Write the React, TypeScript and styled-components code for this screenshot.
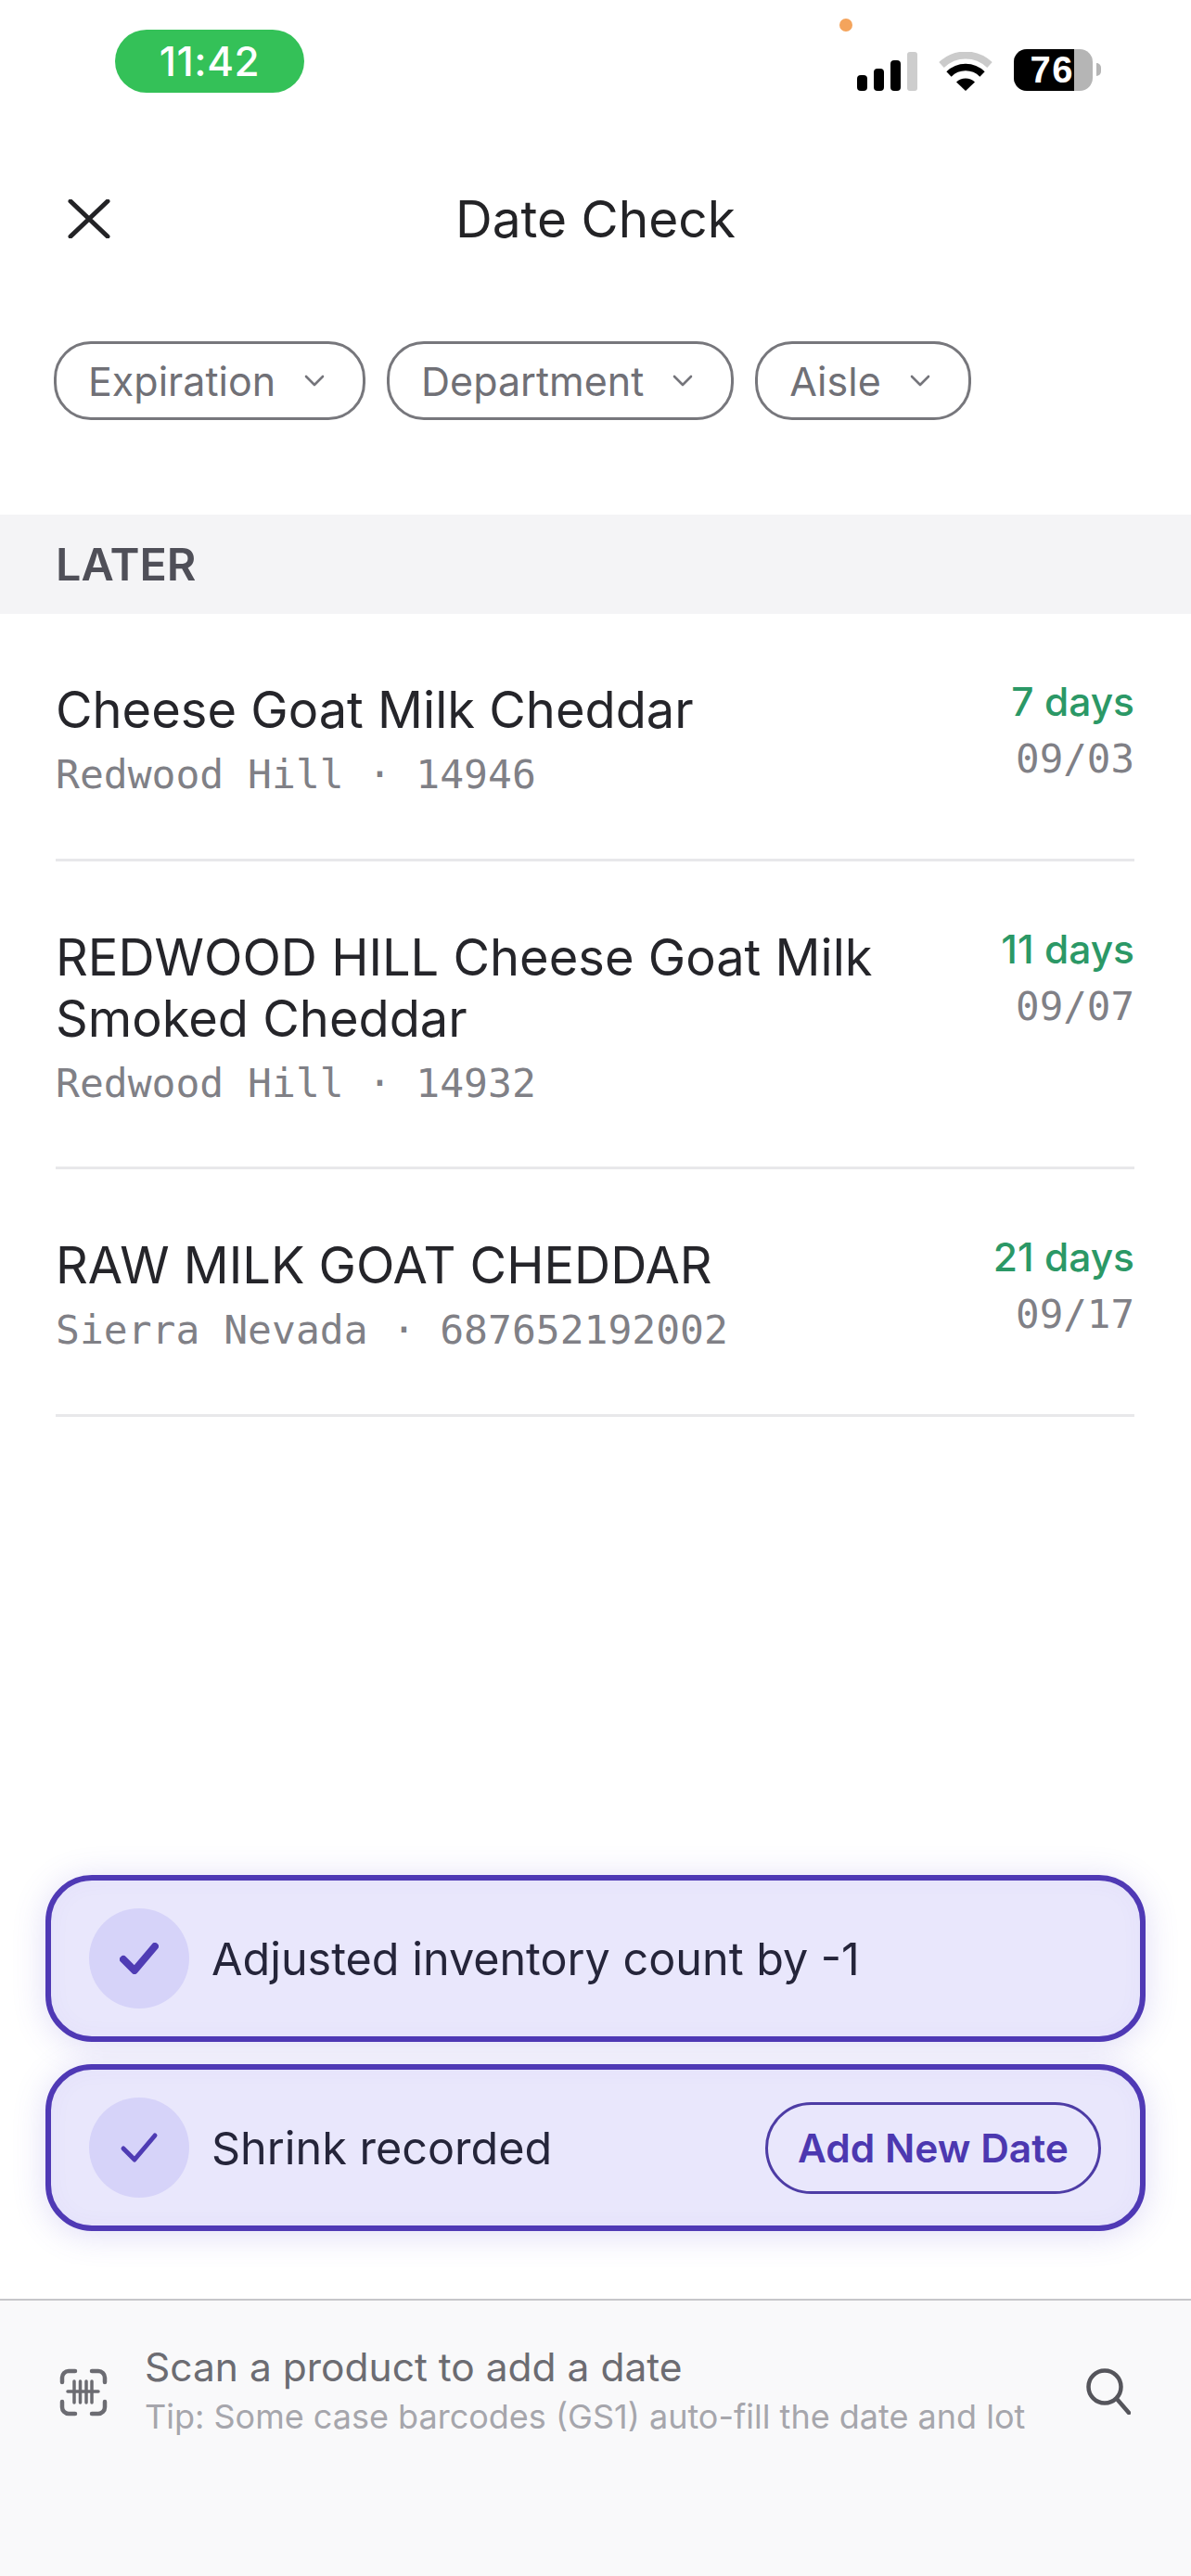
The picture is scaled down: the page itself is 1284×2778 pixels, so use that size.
import styled, { createGlobalStyle } from "styled-components";

const GlobalStyle = createGlobalStyle`
  html, body {
    margin: 0;
    padding: 0;
    background: #fff;
  }
  body {
    font-family: Inter, "Noto Sans", sans-serif;
  }
`;

const items = [
  { title: ["Cheese Goat Milk Cheddar"], sub: "Redwood Hill · 14946", days: "7 days", date: "09/03" },
  { title: ["REDWOOD HILL Cheese Goat Milk", "Smoked Cheddar"], sub: "Redwood Hill · 14932", days: "11 days", date: "09/07" },
  { title: ["RAW MILK GOAT CHEDDAR"], sub: "Sierra Nevada · 687652192002", days: "21 days", date: "09/17" },
];

const Chevron = () => (
  <svg width="22" height="13" viewBox="0 0 22 13" fill="none" stroke="#75757b" strokeWidth="2.6" strokeLinecap="round" strokeLinejoin="round">
    <path d="M2 2l9 9 9-9" />
  </svg>
);

const Check = ({ weight }: { weight: number }) => (
  <svg width="42" height="34" viewBox="0 0 42 34" fill="none" stroke="#4f3cb4" strokeWidth={weight} strokeLinecap="round" strokeLinejoin="round">
    <path d="M4 18l12 12L38 4" />
  </svg>
);

export default function App() {
  return (
    <>
      <GlobalStyle />
      <Page>
        <StatusBar>
          <TimePill>11:42</TimePill>
          <StatusIcons>
            <OrangeDot />
            <svg width="66" height="42" viewBox="0 0 66 42">
              <rect x="0" y="25" width="11" height="17" rx="4" fill="#000" />
              <rect x="18" y="18" width="11" height="24" rx="4" fill="#000" />
              <rect x="36" y="9" width="11" height="33" rx="4" fill="#000" />
              <rect x="54" y="0" width="11" height="42" rx="3" fill="#cdcdcd" />
            </svg>
            <svg width="58" height="42" viewBox="0 0 58 42">
              <path d="M3 14C18 0 40 0 55 14" fill="none" stroke="#cbcbcb" strokeWidth="8" />
              <path d="M11 24C21 14 37 14 47 24" fill="none" stroke="#000" strokeWidth="7.5" />
              <path d="M19 32.5a14.500 14.500 0 0 1 20 0L29 42z" fill="#000" />
            </svg>
            <Battery>
              <BatteryFill>76</BatteryFill>
              <BatteryNub />
            </Battery>
          </StatusIcons>
        </StatusBar>

        <NavBar>
          <CloseButton>
            <svg width="46" height="42" viewBox="0 0 46 42" fill="none" stroke="#232326" strokeWidth="5" strokeLinecap="round">
              <path d="M3 2l40 38M43 2L3 40" />
            </svg>
          </CloseButton>
          <NavTitle>Date Check</NavTitle>
        </NavBar>

        <FilterRow>
          <Chip>Expiration<Chevron /></Chip>
          <Chip>Department<Chevron /></Chip>
          <Chip>Aisle<Chevron /></Chip>
        </FilterRow>

        <SectionHeader>LATER</SectionHeader>

        <List>
          {items.map((item) => (
            <Row key={item.sub}>
              <RowMain>
                <RowTitle>
                  {item.title.map((line) => (
                    <span key={line}>{line}</span>
                  ))}
                </RowTitle>
                <Mono>{item.sub}</Mono>
              </RowMain>
              <RowSide>
                <Days>{item.days}</Days>
                <DateText>{item.date}</DateText>
              </RowSide>
            </Row>
          ))}
        </List>

        <ToastStack>
          <Toast>
            <CheckCircle><Check weight={8} /></CheckCircle>
            <ToastText>Adjusted inventory count by -1</ToastText>
          </Toast>
          <Toast>
            <CheckCircle><Check weight={5} /></CheckCircle>
            <ToastText>Shrink recorded</ToastText>
            <ToastAction>Add New Date</ToastAction>
          </Toast>
        </ToastStack>

        <ScanBar>
          <svg width="52" height="52" viewBox="0 0 52 52" fill="none" stroke="#6c6c72" strokeLinecap="round">
            <g strokeWidth="4.500">
              <path d="M3 15V10a7 7 0 0 1 7-7h7" />
              <path d="M35 3h7a7 7 0 0 1 7 7v5" />
              <path d="M3 36v6a7 7 0 0 0 7 7h7" />
              <path d="M35 49h7a7 7 0 0 0 7-7v-6" />
            </g>
            <g strokeWidth="3.500">
              <path d="M9 25h33" />
              <path d="M16 14v23M22.500 14v23M29 14v23M35 14v23" />
            </g>
          </svg>
          <ScanCopy>
            <ScanTitle>Scan a product to add a date</ScanTitle>
            <ScanTip>Tip: Some case barcodes (GS1) auto-fill the date and lot</ScanTip>
          </ScanCopy>
          <svg width="48" height="50" viewBox="0 0 48 50" fill="none" stroke="#55555b" strokeWidth="4.500" strokeLinecap="round">
            <circle cx="20" cy="20" r="17.500" />
            <path d="M33 33l13 15" />
          </svg>
        </ScanBar>
      </Page>
    </>
  );
}

const Page = styled.div`
  width: 1284px;
  height: 2778px;
  display: flex;
  flex-direction: column;
  background: #fff;
  overflow: hidden;
`;

const StatusBar = styled.div`
  height: 132px;
  box-sizing: border-box;
  padding: 32px 106px 0 124px;
  display: flex;
  justify-content: space-between;
  align-items: flex-start;
`;

const TimePill = styled.div`
  width: 204px;
  height: 68px;
  border-radius: 34px;
  background: #34c158;
  color: #fff;
  font-size: 44px;
  font-weight: 500;
  letter-spacing: 0.5px;
  display: flex;
  align-items: center;
  justify-content: center;
`;

const StatusIcons = styled.div`
  position: relative;
  margin-top: 21px;
  display: flex;
  align-items: flex-end;
  gap: 22px;
`;

const OrangeDot = styled.span`
  position: absolute;
  left: -19px;
  top: -33px;
  width: 14px;
  height: 14px;
  border-radius: 50%;
  background: #f4a45c;
`;

const Battery = styled.div`
  position: relative;
  width: 85px;
  height: 45px;
  margin-left: 1px;
  border-radius: 14px;
  background: #b5b5b5;
  display: flex;
`;

const BatteryFill = styled.div`
  width: 65px;
  height: 45px;
  box-sizing: border-box;
  border-radius: 14px 0 0 14px;
  background: #000;
  color: #fff;
  font-family: "Liberation Sans", sans-serif;
  font-size: 40px;
  font-weight: 700;
  letter-spacing: 1.5px;
  line-height: 45px;
  text-align: right;
`;

const BatteryNub = styled.span`
  position: absolute;
  right: -9px;
  top: 15px;
  width: 5px;
  height: 14px;
  border-radius: 0 5px 5px 0;
  background: #b5b5b5;
`;

const NavBar = styled.div`
  position: relative;
  height: 208px;
  box-sizing: border-box;
  display: flex;
  align-items: flex-start;
  justify-content: center;
`;

const CloseButton = styled.div`
  position: absolute;
  left: 73px;
  top: 83px;
  line-height: 0;
`;

const NavTitle = styled.div`
  margin-top: 70px;
  font-size: 55px;
  line-height: 68px;
  font-weight: 400;
  color: #232326;
`;

const FilterRow = styled.div`
  display: flex;
  gap: 23px;
  padding: 28px 58px 0;
  height: 215px;
  box-sizing: border-box;
`;

const Chip = styled.div`
  height: 85px;
  box-sizing: border-box;
  padding: 0 41px 0 34px;
  border: 3px solid #77777c;
  border-radius: 40px;
  display: flex;
  align-items: center;
  gap: 31px;
  font-size: 43px;
  color: #707076;
`;

const SectionHeader = styled.div`
  height: 107px;
  box-sizing: border-box;
  padding-left: 60px;
  background: #f4f4f6;
  display: flex;
  align-items: center;
  font-size: 48.500px;
  font-weight: 600;
  color: #4f4f58;
`;

const List = styled.div`
  flex: 1;
  padding: 0 61px 0 60px;
`;

const Row = styled.div`
  display: flex;
  justify-content: space-between;
  align-items: flex-start;
  padding: 70px 0 61.5px;
  border-bottom: 3px solid #e8e8ea;
`;

const RowMain = styled.div`
  display: flex;
  flex-direction: column;
`;

const RowTitle = styled.div`
  display: flex;
  flex-direction: column;
  font-size: 54.200px;
  line-height: 66px;
  color: #25252a;
`;

const Mono = styled.div`
  margin-top: 8px;
  font-family: "DejaVu Sans Mono", "Liberation Mono", monospace;
  font-size: 43px;
  line-height: 58px;
  color: #808086;
`;

const RowSide = styled.div`
  display: flex;
  flex-direction: column;
  align-items: flex-end;
  margin-top: -3px;
`;

const Days = styled.div`
  font-size: 42.500px;
  font-weight: 500;
  line-height: 56px;
  color: #2b9866;
`;

const DateText = styled(Mono)`
  margin-top: 5px;
  font-size: 42.500px;
`;

const ToastStack = styled.div`
  display: flex;
  flex-direction: column;
  gap: 24px;
  padding: 0 49px 73px 49px;
`;

const Toast = styled.div`
  height: 180px;
  box-sizing: border-box;
  padding: 0 42px 0 41px;
  border: 6px solid #4f39b5;
  border-radius: 50px;
  background: #e9e7fc;
  box-shadow:
    0 4px 36px rgba(94, 78, 210, 0.2),
    inset 0 0 24px rgba(94, 78, 210, 0.04);
  display: flex;
  align-items: center;
  gap: 24px;
`;

const CheckCircle = styled.div`
  width: 108px;
  height: 108px;
  flex-shrink: 0;
  border-radius: 50%;
  background: #d6d3f9;
  display: flex;
  align-items: center;
  justify-content: center;
`;

const ToastText = styled.div`
  flex: 1;
  font-size: 48.500px;
  color: #25253a;
`;

const ToastAction = styled.div`
  height: 99px;
  box-sizing: border-box;
  padding: 0 32px;
  border: 3px solid #4d3ca5;
  border-radius: 50px;
  display: flex;
  align-items: center;
  font-size: 42.500px;
  font-weight: 600;
  color: #4c38b0;
`;

const ScanBar = styled.div`
  height: 299px;
  box-sizing: border-box;
  padding: 73px 65px 0 64px;
  background: #f9f9fa;
  border-top: 2px solid #c6c6ca;
  display: flex;
  align-items: flex-start;
  gap: 40px;
`;

const ScanCopy = styled.div`
  flex: 1;
  margin-top: -27px;
  display: flex;
  flex-direction: column;
  gap: 3px;
`;

const ScanTitle = styled.div`
  font-size: 42.500px;
  line-height: 52px;
  color: #6c6c72;
`;

const ScanTip = styled.div`
  font-size: 36px;
  line-height: 48px;
  color: #a6a6ac;
`;
